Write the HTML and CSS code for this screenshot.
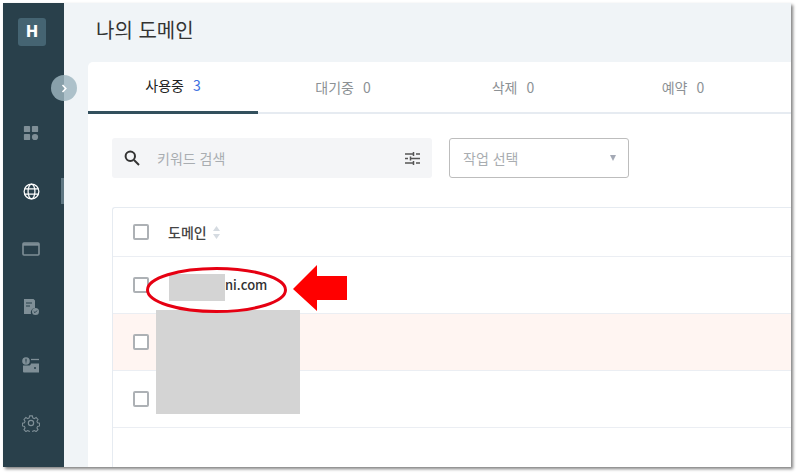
FILE: index.html
```html
<!DOCTYPE html>
<html lang="ko">
<head>
<meta charset="utf-8">
<title>나의 도메인</title>
<link rel="stylesheet" href="styles.css">
</head>
<body>
<div class="frame">
  <aside class="sidebar">
    <div class="logo">H</div>
    <nav class="nav">
      <span class="nav-item"><svg width="16" height="16" viewBox="0 0 18 18" fill="#7f8f97"><rect x="1" y="1" width="7" height="7" rx="1"/><rect x="10" y="1" width="7" height="7" rx="1"/><rect x="1" y="10" width="7" height="7" rx="1"/><circle cx="13.5" cy="13.5" r="3.5"/></svg></span>
      <span class="nav-item nav-active"><svg width="17" height="17" viewBox="0 0 18 18" fill="none" stroke="#fff" stroke-width="1.3"><circle cx="9" cy="9" r="7.8"/><ellipse cx="9" cy="9" rx="3.6" ry="7.8"/><path d="M1.6 6.3h14.8M1.6 11.7h14.8"/></svg></span>
      <span class="nav-item"><svg width="18" height="16" viewBox="0 0 18 16" fill="none" stroke="#7f8f97"><rect x="1" y="2" width="16" height="12" rx="1" stroke-width="1.6"/><path d="M1 3.5h16" stroke-width="2.4"/></svg></span>
      <span class="nav-item"><svg width="18" height="18" viewBox="0 0 18 18"><path d="M2 1h9.500l1.500 1.500V10a4.500 4.500 0 0 0-4 6H2z" fill="#7f8f97"/><path d="M4 5h6M4 8h4" stroke="#29404b" stroke-width="1"/><circle cx="13.500" cy="13.500" r="3.500" fill="#7f8f97"/><path d="M11.800 13.500l1.200 1.200 2-2.200" fill="none" stroke="#29404b" stroke-width="1"/></svg></span>
      <span class="nav-item"><svg width="18" height="16" viewBox="0 0 18 16"><circle cx="4" cy="4" r="3.800" fill="#7f8f97"/><path d="M4 1.800v3M4 5.500v.8" stroke="#29404b" stroke-width="1.100"/><path d="M9 2.500h8" stroke="#7f8f97" stroke-width="1.300"/><path d="M1 8.500h6.500q1 0 1.500-2H17v9H2a1 1 0 0 1-1-1z" fill="#7f8f97"/><circle cx="13" cy="11" r="1" fill="#29404b"/></svg></span>
      <span class="nav-item"><svg width="18" height="18" viewBox="0 0 24 24" fill="none" stroke="#7f8f97" stroke-width="1.600"><circle cx="12" cy="12" r="3.500"/><path d="M10 1.500h4l.7 3 2.200 1 2.700-1.600 2.800 2.900-1.600 2.600.9 2.200 3 .7v4l-3 .7-.9 2.200 1.600 2.600-2.800 2.900-2.700-1.600-2.200 1-.7 3h-4l-.7-3-2.200-1-2.700 1.600-2.800-2.900 1.600-2.600-.9-2.200-3-.7v-4l3-.7.9-2.200-1.600-2.600 2.800-2.900 2.700 1.600 2.200-1z" transform="translate(1.200 1.200) scale(.9)"/></svg></span>
    </nav>
  </aside>
  <main class="main">
    <h1 class="title">나의 도메인</h1>
    <section class="card">
      <div class="tabs">
        <div class="tab tab-active">사용중<b class="count count-blue">3</b></div>
        <div class="tab">대기중<b class="count">0</b></div>
        <div class="tab">삭제<b class="count">0</b></div>
        <div class="tab">예약<b class="count">0</b></div>
      </div>
      <div class="filters">
        <div class="search">
          <svg class="search-icon" width="16" height="16" viewBox="0 0 16 16" fill="none" stroke="#333" stroke-width="2"><circle cx="6.300" cy="6.300" r="4.700"/><path d="M10 10l5 5"/></svg>
          <span class="search-text">키워드 검색</span>
          <svg width="15" height="13" viewBox="0 0 15 13" stroke="#555" stroke-width="1.500" fill="none"><path d="M0 2h8M11 2h4M8.500 0v4M0 6.500h3M6 6.500h9M5.500 4.500v4M0 11h8M11 11h4M8.500 9v4"/></svg>
        </div>
        <div class="select">
          <span>작업 선택</span>
          <i class="caret"></i>
        </div>
      </div>
      <div class="table">
        <div class="row row-head">
          <i class="check"></i>
          <span class="head-label">도메인</span>
          <svg class="sort" width="7" height="13" viewBox="0 0 7 13" fill="#d5dbe1"><path d="M3.500 0L7 5H0zM3.500 13L0 8h7z"/></svg>
        </div>
        <div class="row"><i class="check"></i><span class="domain">ni.com</span></div>
        <div class="row row-pink"><i class="check"></i></div>
        <div class="row"><i class="check"></i></div>
      </div>
    </section>
  </main>
  <button class="toggle"><svg width="7" height="9" viewBox="0 0 7 9" fill="none" stroke="#fff" stroke-width="1.600"><path d="M1.500 1l3.300 3.500L1.500 8"/></svg></button>
  <div class="mask mask-small"></div>
  <div class="mask mask-large"></div>
  <svg class="mark" width="210" height="52" viewBox="0 0 210 52"><ellipse cx="70.500" cy="27" rx="69" ry="21.500" fill="none" stroke="#e60012" stroke-width="3"/><path d="M147 26l24-24v11h30v24h-30v11z" fill="#ff0000"/></svg>
</div>
</body>
</html>
```
FILE: styles.css
```css
* { box-sizing: border-box; }
html, body { margin: 0; padding: 0; background: #fff; }
body { width: 800px; height: 476px; overflow: hidden; font-family: "Noto Sans CJK KR", "Noto Sans", sans-serif; }
.frame { position: relative; display: flex; width: 788px; height: 464px; margin: 3px; background: #f0f4f7; box-shadow: 2px 2px 3px #808080; overflow: visible; }
.sidebar { flex: none; width: 61px; height: 100%; background: #29404b; display: flex; flex-direction: column; align-items: center; padding: 15px 5px 0 0; }
.logo { width: 28px; height: 28px; margin-left: 2px; border-radius: 3px; background: #456472; color: #fff; font: 700 15px/28px "DejaVu Sans", sans-serif; text-align: center; }
.nav { display: flex; flex-direction: column; margin-top: 58px; }
.nav-item { position: relative; display: flex; align-items: center; justify-content: center; width: 24px; height: 58px; }
.nav-active::after { content: ""; position: absolute; left: 42px; top: 16px; width: 3px; height: 26px; background: #5f7783; }
.main { flex: 1; min-width: 0; height: 100%; padding-left: 24px; display: flex; flex-direction: column; overflow: hidden; }
.title { margin: 0; height: 59px; padding: 12px 0 0 8px; font-size: 20px; line-height: 30px; font-weight: 400; color: #333; }
.card { flex: 1; background: #fff; border-radius: 5px 0 0 0; }
.tabs { display: flex; height: 52px; border-bottom: 2px solid #e6ebf1; }
.tab { width: 170px; height: 52px; display: flex; align-items: center; justify-content: center; padding-bottom: 3px; font-size: 14px; color: #8c9195; }
.tab-active { color: #222; border-bottom: 3px solid #33505d; }
.count { margin-left: 9px; font-weight: 400; font-size: 14px; }
.count-blue { color: #3d6fe0; }
.filters { display: flex; gap: 17px; margin: 24px 0 0 24px; }
.search { width: 320px; height: 40px; display: flex; align-items: center; padding: 0 12px; background: #f4f5f7; border-radius: 3px; }
.search-icon { margin-right: 17px; }
.search-text { flex: 1; font-size: 14px; color: #a9adb1; }
.select { width: 180px; height: 40px; display: flex; align-items: center; justify-content: space-between; padding: 0 12px 0 13px; border: 1px solid #bdbdbd; border-radius: 3px; font-size: 14px; color: #a9adb1; }
.caret { width: 0; height: 0; border-left: 3.500px solid transparent; border-right: 3.500px solid transparent; border-top: 6px solid #a4a9b5; }
.table { margin: 29px 0 0 24px; height: 260px; border: 1px solid #e6ebf1; border-right: 0; border-bottom: 0; border-radius: 3px 0 0 0; }
.row { display: flex; align-items: center; height: 57px; padding-left: 20px; border-bottom: 1px solid #ebeef3; }
.row-head { height: 49px; }
.row-pink { background: #fff5f2; }
.check { flex: none; width: 16px; height: 16px; border: 2px solid #adb1b5; border-radius: 2px; background: #fff; }
.head-label { margin-left: 19px; font-size: 14px; font-weight: 500; color: #444; }
.sort { margin-left: 6px; }
.domain { margin: -2px 0 0 76px; font-size: 13px; font-weight: 500; color: #333; }
.toggle { position: absolute; left: 48px; top: 72px; width: 26px; height: 26px; padding: 0; border: 0; border-radius: 50%; background: rgba(158, 182, 192, .82); display: flex; align-items: center; justify-content: center; }
.mask { position: absolute; background: #d4d4d4; }
.mask-small { left: 166px; top: 271px; width: 56px; height: 27px; }
.mask-large { left: 153px; top: 307px; width: 144px; height: 104px; }
.mark { position: absolute; left: 143px; top: 260px; }
```
